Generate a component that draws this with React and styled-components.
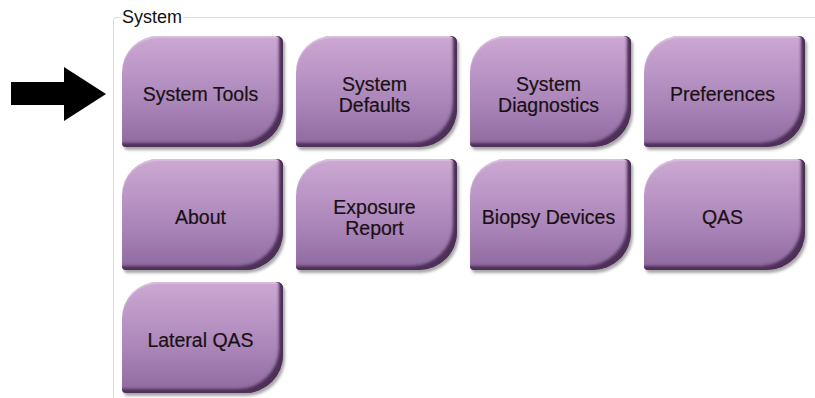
import React from 'react'
import styled, { createGlobalStyle } from 'styled-components'

const Global = createGlobalStyle`
  html, body {
    margin: 0;
    padding: 0;
    background: #ffffff;
    overflow: hidden;
  }
  body {
    font-family: "Liberation Sans", Arial, sans-serif;
  }
`

const Page = styled.div`
  display: flex;
  width: 815px;
  height: 398px;
  overflow: hidden;
`

const Pointer = styled.div`
  width: 113px;
  flex: none;
  padding-top: 67px;
  padding-left: 10px;
  box-sizing: border-box;
`

const Group = styled.fieldset`
  flex: 1;
  margin: 7px -20px 0 0;
  padding: 8px 0 0 8px;
  border: 1px solid #d6dee7;
  border-radius: 3px;
  min-height: 400px;
`

const Caption = styled.legend`
  padding: 0 1px;
  margin-left: -1px;
  font-size: 18px;
  line-height: 21px;
  color: #111;
`

const Grid = styled.div`
  display: grid;
  grid-template-columns: repeat(4, 161px);
  grid-auto-rows: 111px;
  column-gap: 13px;
  row-gap: 12px;
`

const Tile = styled.button`
  box-sizing: border-box;
  border: none;
  padding: 0 10px 6px 0;
  margin: 0;
  border-radius: 36px 6px 38px 4px;
  background: linear-gradient(
    to bottom,
    #cca8d2 0%,
    #bc97c7 30%,
    #a682b6 65%,
    #8d699d 100%
  );
  box-shadow:
    inset -7px -7px 3px -3px #4d2f58,
    inset -2px 0 0 #5b3b66,
    inset 0 2px 1px rgba(255, 255, 255, 0.25),
    2px 3px 3px rgba(0, 0, 0, 0.35);
  display: flex;
  align-items: center;
  justify-content: center;
  text-align: center;
  font-family: "Liberation Sans", Arial, sans-serif;
  font-size: 19.5px;
  line-height: 21px;
  color: #1a1014;
  cursor: pointer;
`

const Label = styled.span`
  display: block;
  padding-top: 12px;
  padding-left: 6px;
  -webkit-text-stroke: 0.2px #1a1014;
`

const Arrow = () => (
  <svg width="97" height="55" viewBox="0 0 97 55">
    <polygon points="1,15 54,15 54,0 96,27 54,54 54,38 1,38" fill="#000" />
  </svg>
)

const items = [
  ['System Tools'],
  ['System', 'Defaults'],
  ['System', 'Diagnostics'],
  ['Preferences'],
  ['About'],
  ['Exposure', 'Report'],
  ['Biopsy Devices'],
  ['QAS'],
  ['Lateral QAS'],
]

export default function App() {
  return (
    <>
      <Global />
      <Page>
        <Pointer>
          <Arrow />
        </Pointer>
        <Group>
          <Caption>System</Caption>
          <Grid>
            {items.map(lines => (
              <Tile key={lines.join(' ')}>
                <Label>
                  {lines.map((l, i) => (
                    <React.Fragment key={i}>
                      {i > 0 && <br />}
                      {l}
                    </React.Fragment>
                  ))}
                </Label>
              </Tile>
            ))}
          </Grid>
        </Group>
      </Page>
    </>
  )
}
